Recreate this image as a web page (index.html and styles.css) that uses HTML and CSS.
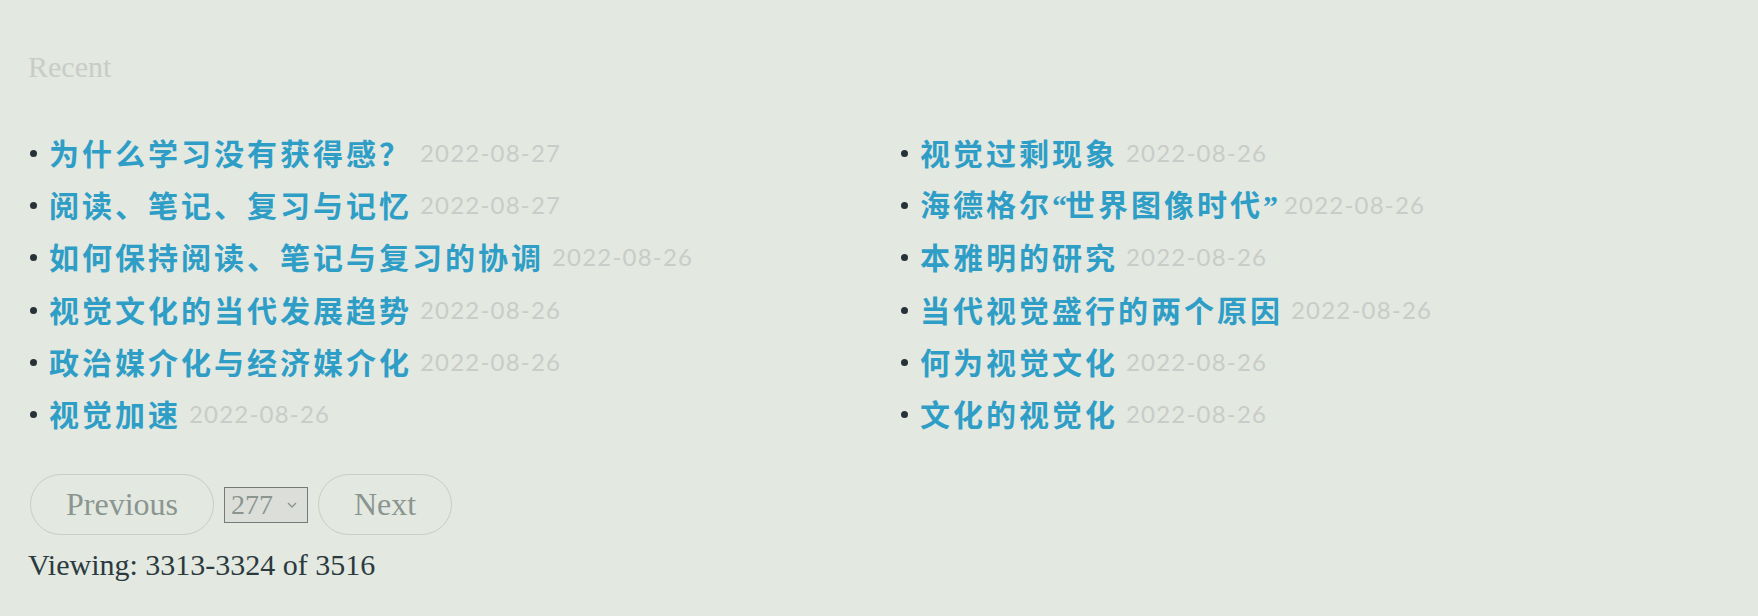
FILE: index.html
```html
<!DOCTYPE html>
<html lang="zh-CN">
<head>
<meta charset="utf-8">
<title>Recent</title>
<link rel="stylesheet" href="styles.css">
</head>
<body>
<main class="page">
  <h2 class="recent">Recent</h2>
  <ul class="posts">
    <li class="post"><a class="title" href="#">为什么学习没有获得感？</a><span class="date">2022-08-27</span></li>
    <li class="post"><a class="title" href="#">阅读、笔记、复习与记忆</a><span class="date">2022-08-27</span></li>
    <li class="post"><a class="title" href="#">如何保持阅读、笔记与复习的协调</a><span class="date">2022-08-26</span></li>
    <li class="post"><a class="title" href="#">视觉文化的当代发展趋势</a><span class="date">2022-08-26</span></li>
    <li class="post"><a class="title" href="#">政治媒介化与经济媒介化</a><span class="date">2022-08-26</span></li>
    <li class="post"><a class="title" href="#">视觉加速</a><span class="date">2022-08-26</span></li>
    <li class="post"><a class="title" href="#">视觉过剩现象</a><span class="date">2022-08-26</span></li>
    <li class="post"><a class="title" href="#">海德格尔<span class="q">“</span>世界图像时代<span class="q">”</span></a><span class="date">2022-08-26</span></li>
    <li class="post"><a class="title" href="#">本雅明的研究</a><span class="date">2022-08-26</span></li>
    <li class="post"><a class="title" href="#">当代视觉盛行的两个原因</a><span class="date">2022-08-26</span></li>
    <li class="post"><a class="title" href="#">何为视觉文化</a><span class="date">2022-08-26</span></li>
    <li class="post"><a class="title" href="#">文化的视觉化</a><span class="date">2022-08-26</span></li>
  </ul>
  <div class="pager">
    <button class="pill" type="button">Previous</button>
    <span class="select-wrap">
      <select class="page-select">
        <option>277</option>
      </select>
      <svg class="chev" width="10" height="6" viewBox="0 0 10 6" aria-hidden="true"><path d="M1 1 L5 5 L9 1" fill="none" stroke="#8a9590" stroke-width="1.4"/></svg>
    </span>
    <button class="pill" type="button">Next</button>
  </div>
  <p class="viewing">Viewing: 3313-3324 of 3516</p>
</main>
</body>
</html>
```

FILE: styles.css
```css
html, body {
  margin: 0;
  padding: 0;
  background: #e3e8e1;
}

.page {
  padding: 50px 0 0 28px;
  font-family: "Liberation Serif", serif;
}

.recent {
  margin: 0;
  font-size: 30px;
  line-height: 34px;
  font-weight: normal;
  color: #c9ccc7;
}

.posts {
  list-style: none;
  margin: 42px 0 0 0;
  padding: 0;
  display: grid;
  grid-template-columns: 871px 1fr;
  grid-template-rows: repeat(6, 52.2px);
  grid-auto-flow: column;
}

.post {
  display: flex;
  align-items: center;
  white-space: nowrap;
}

.post::before {
  content: "";
  width: 7px;
  height: 7px;
  border-radius: 50%;
  background: #263238;
  margin: 3px 12px 0 2px;
  flex: none;
}

.title {
  font-family: "Noto Sans CJK SC", sans-serif;
  font-size: 30px;
  font-weight: 700;
  letter-spacing: 3px;
  line-height: 1;
  color: #2e9ec6;
  text-decoration: none;
}

.q {
  font-family: "Liberation Serif", serif;
  font-weight: 700;
  letter-spacing: -2px;
}

.date {
  font-family: Lato, sans-serif;
  font-weight: 400;
  font-size: 24px;
  letter-spacing: 1.2px;
  line-height: 1;
  color: #c9ccc8;
  margin-left: 8px;
  margin-top: 2px;
}

.pager {
  display: flex;
  align-items: center;
  gap: 10px;
  margin-top: 35px;
  margin-left: 2px;
}

.pill {
  height: 61px;
  padding: 0 35px;
  border: 1px solid #cacdc6;
  border-radius: 31px;
  background: transparent;
  font-family: "Liberation Serif", serif;
  font-size: 32px;
  color: #8a9590;
}

.select-wrap {
  position: relative;
  display: inline-flex;
}

.page-select {
  appearance: none;
  -webkit-appearance: none;
  width: 84px;
  height: 36px;
  padding: 0 0 0 6px;
  border: 1px solid #757a76;
  border-radius: 0;
  background: #dcdfd9;
  font-family: "Liberation Serif", serif;
  font-size: 28px;
  color: #8a9590;
}

.chev {
  position: absolute;
  right: 11px;
  top: 15px;
  pointer-events: none;
}

.viewing {
  margin: 13px 0 0 0;
  font-size: 30px;
  line-height: 34px;
  color: #2b3a3e;
}
```
